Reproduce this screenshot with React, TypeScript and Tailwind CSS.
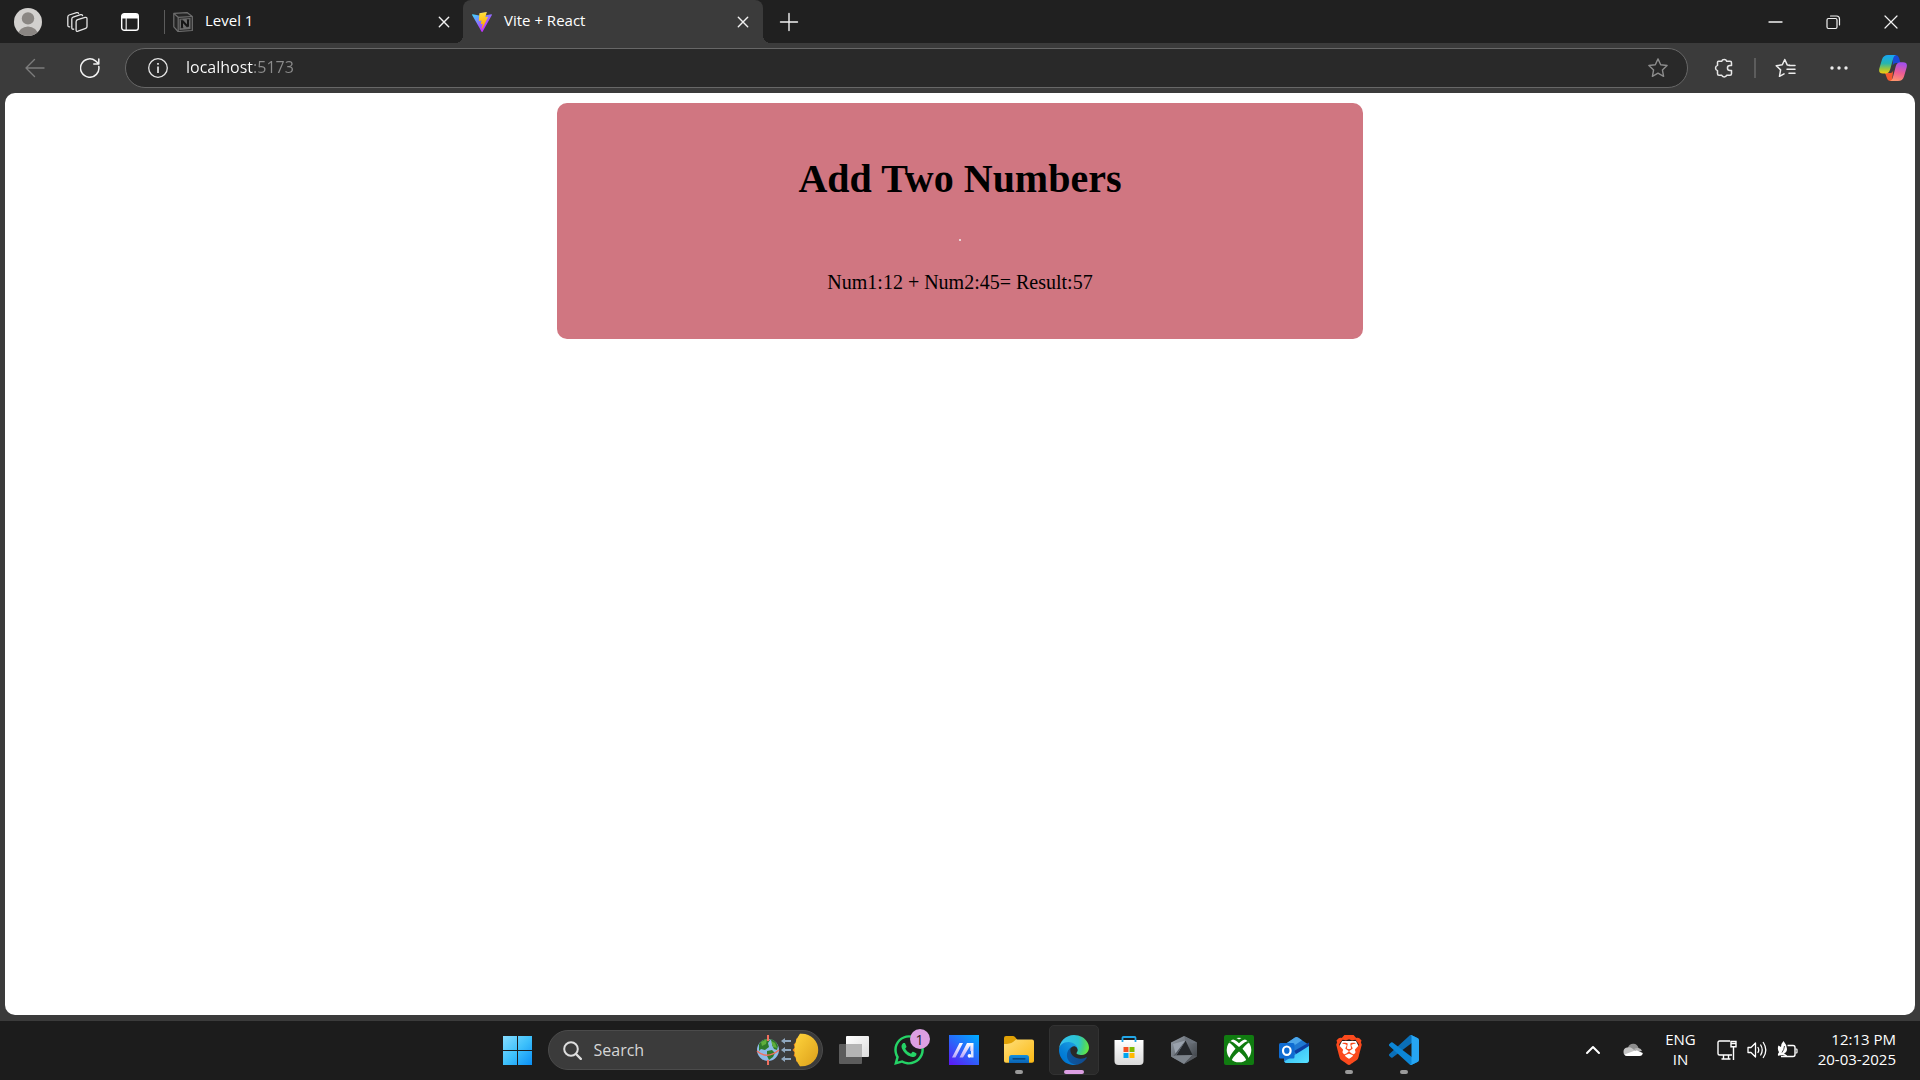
import React from "react";
import { FaWhatsapp } from "react-icons/fa";
import { SiBrave } from "react-icons/si";

type IconProps = { className?: string };

function Line({ d, className = "", width = 1.4, size = 20 }: { d: string; className?: string; width?: number; size?: number }) {
  return (
    <svg
      width={size}
      height={size}
      viewBox={`0 0 ${size} ${size}`}
      fill="none"
      stroke="currentColor"
      strokeWidth={width}
      strokeLinecap="round"
      strokeLinejoin="round"
      className={`shrink-0 ${className}`}
      aria-hidden="true"
    >
      <path d={d} />
    </svg>
  );
}

const closeD = "M5.3 5.3l9.4 9.4M14.7 5.3l-9.4 9.4";
const starD = "M10 .9l2.7 5.8 6.4.8-4.7 4.4 1.2 6.4-5.6-3.1-5.6 3.1 1.2-6.4L.9 7.5l6.4-.8z";

function Avatar() {
  return (
    <svg width="28" height="28" viewBox="0 0 28 28" className="shrink-0" aria-hidden="true">
      <defs>
        <clipPath id="avatar">
          <circle cx="14" cy="14" r="14" />
        </clipPath>
      </defs>
      <g clipPath="url(#avatar)">
        <rect width="28" height="28" fill="#d2d0ce" />
        <circle cx="14" cy="10.4" r="6.2" fill="#8a8683" />
        <ellipse cx="14" cy="27" rx="10" ry="8.6" fill="#8a8683" />
      </g>
    </svg>
  );
}

function Workspaces() {
  return (
    <svg width="22" height="22" viewBox="0 0 22 22" fill="none" stroke="#e4e4e4" strokeWidth="1.3" strokeLinejoin="round" strokeLinecap="round" aria-hidden="true">
      <path d="M10.9 8.9l8.2-2.5q1.9-.5 1.9 1.4v7.6q0 1.4-1.3 1.9l-7.7 2.9q-1.9.6-1.9-1.2v-8.2q0-1.5 1.300-1.9z" />
      <path d="M7.700 18.200q-1.900.3-1.900-1.500V8q0-1.500 1.300-1.900l7.500-2.400q1.600-.4 2 .9" />
      <path d="M3.700 15.800q-1.900.3-1.900-1.500V5.900q0-1.500 1.300-1.900l7.500-2.300q1.600-.4 2 .7" />
    </svg>
  );
}

function VerticalTabs() {
  return (
    <svg width="18" height="18" viewBox="0 0 18 18" fill="none" aria-hidden="true">
      <rect x=".7" y=".7" width="16.600" height="16.600" rx="2.600" stroke="#fff" strokeWidth="1.400" />
      <path d="M1 5.500V3q0-2 2-2h12q2 0 2 2v2.500z" fill="#fff" />
      <path d="M5.200 5v12" stroke="#e8e8e8" strokeWidth="1.200" />
    </svg>
  );
}

function Notion() {
  return (
    <svg width="20" height="20" viewBox="0 0 20 20" fill="none" aria-hidden="true">
      <path d="M.8 1.400L14 .6l5.300 3.900v14L5 19.500.8 14.800z" fill="#262626" stroke="#6f6f6f" strokeWidth="1.200" strokeLinejoin="round" />
      <path d="M1 1.600l4.200 3.700 13.900-.8M5.200 5.300v14" stroke="#6f6f6f" strokeWidth="1.200" />
      <path d="M6.500 6.800l11-.7v11l-11 .8z" fill="#6d6d6d" />
      <path d="M9 15.500V8.600M9.200 8.800l5.600 6M15 14.800V8" stroke="#161616" strokeWidth="2" />
      <path d="M7.800 8.200h2M13.800 7.800h2.500M7.800 15.700h2.500" stroke="#161616" strokeWidth="1" />
    </svg>
  );
}

function Vite() {
  return (
    <svg width="20" height="20" viewBox="0 0 256 257" aria-hidden="true">
      <defs>
        <linearGradient id="viteA" x1="-.8%" x2="57.600%" y1="7.600%" y2="78.400%">
          <stop offset="0" stopColor="#41D1FF" />
          <stop offset="1" stopColor="#BD34FE" />
        </linearGradient>
        <linearGradient id="viteB" x1="43.300%" x2="50.300%" y1="2.200%" y2="89%">
          <stop offset="0" stopColor="#FFEA83" />
          <stop offset=".083" stopColor="#FFDD35" />
          <stop offset="1" stopColor="#FFA800" />
        </linearGradient>
      </defs>
      <path fill="url(#viteA)" d="M255.153 37.938L134.897 252.976c-2.483 4.44-8.862 4.466-11.382.048L.875 37.958c-2.746-4.814 1.371-10.646 6.827-9.67l120.385 21.517a6.537 6.537 0 0 0 2.322-.004l117.867-21.483c5.438-.991 9.574 4.796 6.877 9.62Z" />
      <path fill="url(#viteB)" d="M185.432.063L96.44 17.501a3.268 3.268 0 0 0-2.634 3.014l-5.474 92.456a3.268 3.268 0 0 0 3.997 3.378l24.777-5.718c2.318-.535 4.413 1.507 3.936 3.838l-7.361 36.047c-.495 2.426 1.782 4.5 4.151 3.78l15.304-4.649c2.372-.72 4.652 1.36 4.15 3.788l-11.698 56.621c-.732 3.542 3.979 5.473 5.943 2.437l1.313-2.028l72.516-144.72c1.215-2.423-.88-5.186-3.54-4.672l-25.505 4.922c-2.396.462-4.435-1.77-3.759-4.114l16.646-57.705c.677-2.35-1.37-4.583-3.769-4.113Z" />
    </svg>
  );
}

function Puzzle() {
  return (
    <Line
      width={1.5}
      className="text-[#e6e6e6]"
      d="M4.500 3.300H7.700A2.600 2.600 0 0 1 12.700 3.300H16Q17.500 3.300 17.500 4.800V7.400H16A2.500 2.500 0 0 0 16 12.500H17.500V15.800Q17.500 17.300 16 17.300H12.700A2.600 2.200 0 0 1 7.700 17.300H5Q3.500 17.300 3.500 15.800V12.600A2.700 2.700 0 0 1 3.500 7.400V4.300Q3.500 3.300 4.500 3.300Z"
    />
  );
}

function Favorites() {
  return (
    <svg width="21" height="20" viewBox="0 0 21 20" fill="none" stroke="#ececec" strokeWidth="1.500" strokeLinecap="round" strokeLinejoin="round" aria-hidden="true">
      <path d="M14.500 7.300l-2.300-.4L9.800 1.500 7.300 6.800 1.200 7.700l4.400 4.200-1.100 6.400L9 15.900" />
      <path d="M14 7.600h6M12 11.300h8M14 15.200h6" />
    </svg>
  );
}

function Copilot() {
  return (
    <svg width="28" height="26" viewBox="0 0 28 26" aria-hidden="true">
      <defs>
        <linearGradient id="coA" x1="0" y1="0" x2="0" y2="1">
          <stop offset="0" stopColor="#17a5f5" />
          <stop offset=".45" stopColor="#26b5b0" />
          <stop offset=".75" stopColor="#9cc63c" />
          <stop offset="1" stopColor="#f6c90e" />
        </linearGradient>
        <linearGradient id="coB" x1=".3" y1="0" x2=".1" y2="1">
          <stop offset="0" stopColor="#a650e8" />
          <stop offset=".5" stopColor="#ee5d92" />
          <stop offset="1" stopColor="#ff9a6a" />
        </linearGradient>
      </defs>
      <path d="M14 0h2.500q2.700 0 3.500 2.700L21.500 8H17q-2.500 0-3.300 2.500z" fill="#1a49d6" />
      <path d="M6 18h5.500q2 0 2.700-2.500L13 26h-1.500q-2.800 0-3.600-3z" fill="#f4592f" />
      <path d="M9 0h8q-2 .6-2.700 3L11.300 14Q10 18.500 6.500 18.500H4Q-.8 18.500.3 13.500L3 4.500Q4.400 0 9 0z" fill="url(#coA)" />
      <path d="M19 26h-8q2-.6 2.700-3l3-11.500Q18 7.300 21.500 7.300H24q4.800 0 3.700 5L25 21.500Q23.600 26 19 26z" fill="url(#coB)" />
    </svg>
  );
}

function WindowsLogo() {
  return (
    <svg width="29" height="29" viewBox="0 0 29 29" aria-hidden="true">
      <defs>
        <linearGradient id="win" x1="0" y1="0" x2="1" y2="1">
          <stop offset="0" stopColor="#86dcff" />
          <stop offset=".5" stopColor="#3fc1fb" />
          <stop offset="1" stopColor="#0a8ff5" />
        </linearGradient>
      </defs>
      <path d="M0 0h14v14H0zM15 0h14v14H15zM0 15h14v14H0zM15 15h14v14H15z" fill="url(#win)" />
    </svg>
  );
}

function Equinox() {
  return (
    <svg width="63" height="34" viewBox="0 0 63 34" className="shrink-0" aria-hidden="true">
      <defs>
        <linearGradient id="sun" x1="0" y1="0" x2="1" y2="1">
          <stop offset="0" stopColor="#ffd43c" />
          <stop offset="1" stopColor="#dc9f1a" />
        </linearGradient>
      </defs>
      <circle cx="12" cy="17" r="11" fill="#8dbbe8" />
      <path d="M3 11q3-5 8-5l3 1-2 3 1 4-4 3-4-1-2 2zM14 6q6 1 8 7l-1 4-3-1-2-4 1-2zM11 18l5-1 3 3-2 4-4 3-2-4z" fill="#2f7a2b" />
      <path d="M5 9l6-3-1 5-4 2zM15 8l4 2 2 5-4-1z" fill="#5fae3c" />
      <path d="M1 18q10 9 22-1" fill="none" stroke="#f0705f" strokeWidth="1.500" />
      <path d="M12 2v6M12 27v5" stroke="#f0705f" strokeWidth="2" />
      <g fill="#8fa6bd">
        <path d="M25 8l4-3v2h6v2h-6v2zM25 17l4-3v2h6v2h-6v2zM25 26l4-3v2h6v2h-6v2z" />
      </g>
      <path d="M44 .8l-1 4-3 1 .3 3.500-2.600 2 1 3.200-2.200 2.500 2.200 2.500-1 3.200 2.600 2-.3 3.500 3 1 1 4 4-1V2z" fill="#f08a1c" />
      <path d="M44 .8h2a16.200 16.200 0 0 1 0 32.400h-2q-5.500-7-5.500-16.200T44 .8z" fill="url(#sun)" />
    </svg>
  );
}

function TaskView() {
  return (
    <svg width="30" height="28" viewBox="0 0 30 28" aria-hidden="true">
      <defs>
        <linearGradient id="tv" x1="0" y1="0" x2="1" y2="1">
          <stop offset="0" stopColor="#fff" />
          <stop offset="1" stopColor="#dcdcdc" />
        </linearGradient>
      </defs>
      <rect x="7" y="0" width="23" height="21" rx="1" fill="url(#tv)" />
      <rect x="0" y="8" width="23" height="20" rx="1" fill="#6d6d6d" fillOpacity=".8" />
      <path d="M7 8h16v13H7z" fill="#b4b4b4" />
    </svg>
  );
}

function MyAsus() {
  return (
    <svg width="30" height="30" viewBox="0 0 30 30" aria-hidden="true">
      <defs>
        <linearGradient id="asus" x1=".1" y1="1" x2=".9" y2="0">
          <stop offset="0" stopColor="#5a1cf5" />
          <stop offset=".5" stopColor="#2a66fa" />
          <stop offset="1" stopColor="#00a8ff" />
        </linearGradient>
        <linearGradient id="asusM" x1="0" y1="1" x2="0" y2="0">
          <stop offset="0" stopColor="#b9a8fb" />
          <stop offset="1" stopColor="#fff" />
        </linearGradient>
      </defs>
      <rect width="30" height="30" fill="url(#asus)" />
      <path d="M3 22.500L10.500 8H14L6.500 22.500zM10.500 22.500L18 8h6.500v8h-3.200v-5.500L14 22.500z" fill="url(#asusM)" />
      <circle cx="20.500" cy="20.800" r="1.900" fill="#fff" />
      <path d="M22 16h2.500v6.500H22z" fill="#dfe6ff" />
    </svg>
  );
}

function Folder() {
  return (
    <svg width="30" height="28" viewBox="0 0 30 28" aria-hidden="true">
      <defs>
        <linearGradient id="fold" x1="0" y1="0" x2="1" y2="1">
          <stop offset="0" stopColor="#ffdf7a" />
          <stop offset="1" stopColor="#fbb813" />
        </linearGradient>
        <linearGradient id="foldB" x1="0" y1="0" x2="0" y2="1">
          <stop offset="0" stopColor="#1390df" />
          <stop offset="1" stopColor="#0a62b4" />
        </linearGradient>
      </defs>
      <path d="M0 2q0-2 2-2h7q1 0 2 1l2.500 3H20v6H0z" fill="#e0a106" />
      <path d="M0 8q6 0 9-2l3-2.500h16q2 0 2 2V25q0 1.800-2 1.800H2Q0 26.800 0 25z" fill="url(#fold)" />
      <path d="M5 27v-5.500Q5 19 7.500 19h15q2.500 0 2.500 2.500V27z" fill="url(#foldB)" />
      <path d="M9 22.800h12" stroke="#07396b" strokeWidth="1.200" strokeLinecap="round" />
    </svg>
  );
}

function Edge() {
  return (
    <svg width="30" height="30" viewBox="0 0 256 256" aria-hidden="true">
      <defs>
        <linearGradient id="edA" gradientUnits="userSpaceOnUse" x1="63" y1="177" x2="242" y2="177">
          <stop offset="0" stopColor="#0c59a4" />
          <stop offset="1" stopColor="#114a8b" />
        </linearGradient>
        <linearGradient id="edB" gradientUnits="userSpaceOnUse" x1="157" y1="100" x2="46" y2="221">
          <stop offset="0" stopColor="#1b9de2" />
          <stop offset=".16" stopColor="#1595df" />
          <stop offset=".67" stopColor="#0680d7" />
          <stop offset="1" stopColor="#0078d4" />
        </linearGradient>
        <radialGradient id="edC" gradientUnits="userSpaceOnUse" cx="26" cy="60" r="235">
          <stop offset="0" stopColor="#35c1f1" />
          <stop offset=".3" stopColor="#2fc2df" />
          <stop offset=".6" stopColor="#2bc3d2" />
          <stop offset=".8" stopColor="#46d27b" />
          <stop offset="1" stopColor="#66eb3e" />
        </radialGradient>
      </defs>
      <path fill="url(#edA)" d="M231.1 190.5c-3.4 1.8-6.9 3.4-10.5 4.7a101.73 101.73 0 0 1-35.8 6.4c-47.2 0-88.3-32.4-88.3-74.2.1-11.4 6.400-21.9 16.400-27.3-42.7 1.800-53.7 46.300-53.7 72.300 0 73.7 67.800 81.1 82.500 81.1 7.900 0 19.800-2.300 27-4.600l1.300-.4a128.34 128.34 0 0 0 66.600-52.800c1.200-1.900.6-4.300-1.200-5.500-1.300-.8-2.900-.9-4.300.3z" />
      <path fill="url(#edB)" d="M105.7 241.5c-8.900-5.500-16.600-12.800-22.700-21.3-26.300-36-18.400-86.500 17.600-112.8 3.800-2.700 7.700-5.200 11.900-7.200 3.100-1.500 8.400-4.100 15.500-4 10.100.1 19.600 4.900 25.700 13 4 5.400 6.300 11.900 6.400 18.700 0-.2 24.500-79.600-80-79.600-43.900 0-80 41.700-80 78.200-.2 19.300 4 38.500 12.100 56 27.600 58.800 94.800 87.600 156.400 67.100-21.100 6.600-44.1 3.700-62.900-8.100z" />
      <path fill="url(#edC)" d="M152.3 148.9c-.9 1-3.400 2.500-3.400 5.600 0 2.600 1.700 5.200 4.800 7.300 14.300 10 41.400 8.600 41.500 8.600 10.700 0 21.1-2.900 30.300-8.300 18.800-11 30.400-31.100 30.400-52.900.3-22.400-8-37.300-11.300-43.900C223.5 23.9 177.7 0 128 0 58 0 1 56.2 0 126.2c.5-36.5 36.8-66 80-66 3.500 0 23.500.3 42 10.1 16.300 8.600 24.900 18.900 30.800 29.200 6.200 10.7 7.300 24.100 7.300 29.500 0 5.300-2.700 13.300-7.800 19.900z" />
    </svg>
  );
}

function Store() {
  return (
    <svg width="30" height="30" viewBox="0 0 30 30" aria-hidden="true">
      <defs>
        <linearGradient id="store" x1="0" y1="0" x2="0" y2="1">
          <stop offset="0" stopColor="#fff" />
          <stop offset="1" stopColor="#dadada" />
        </linearGradient>
      </defs>
      <path d="M.5 5h29v21q0 4-4 4h-21q-4 0-4-4z" fill="url(#store)" />
      <path d="M8.500 7V2.800Q8.500 2 9.500 2h11q1 0 1 .8V7" fill="none" stroke="#22a7e8" strokeWidth="1.800" />
      <path d="M9.500 12h5v5h-5z" fill="#f25022" />
      <path d="M15.500 12h5v5h-5z" fill="#7fba00" />
      <path d="M9.500 18h5v5h-5z" fill="#00a4ef" />
      <path d="M15.500 18h5v5h-5z" fill="#ffb900" />
    </svg>
  );
}

function Armoury() {
  return (
    <svg width="26" height="28" viewBox="0 0 26 28" aria-hidden="true">
      <defs>
        <linearGradient id="arm" x1="0" y1="0" x2="1" y2="1">
          <stop offset="0" stopColor="#98a0aa" />
          <stop offset="1" stopColor="#35393e" />
        </linearGradient>
      </defs>
      <path d="M13 0l13 6.500v14L13 28 0 20.500v-14z" fill="url(#arm)" />
      <path d="M13 0l13 6.500-5 1L14.500 4.500z" fill="#6b727b" />
      <path d="M14.500 4.500L21.500 19 5 19.500z" fill="#24272b" />
      <path d="M14.500 4.500L5 19.500 2 8z" fill="#9aa2ad" />
      <path d="M14.500 4.500L6.500 17.800 5 19.500 2.500 20z" fill="#50565e" />
      <path d="M5 19.500l16.500-.5L13 28 0 20.500z" fill="#7c838b" />
      <path d="M21.500 19L26 20.500 13 28z" fill="#55595f" />
    </svg>
  );
}

function Xbox() {
  return (
    <svg width="30" height="30" viewBox="0 0 30 30" aria-hidden="true">
      <rect width="30" height="30" rx="2" fill="#107c10" />
      <circle cx="15" cy="15" r="12.300" fill="#fff" />
      <path d="M15 8.200Q10.500 3.800 6.800 4.300L8.600 2.600Q12.500 2.400 15 4.500q2.500-2.100 6.400-1.900l1.800 1.700Q19.500 3.800 15 8.200z" fill="#107c10" />
      <path d="M6 6Q8.500 6 15 12q6.500-6 9-6l1 2q-2 0-6.500 5.800Q24.500 20.500 25 25l-2.500 1Q21.500 22 15 16.500 8.500 22 7.500 26L5 25q.5-4.500 6.500-11.200Q7 8 5 8z" fill="#107c10" />
    </svg>
  );
}

function Outlook() {
  return (
    <svg width="30" height="26" viewBox="0 0 30 26" aria-hidden="true">
      <defs>
        <linearGradient id="ol" x1="0" y1="0" x2="1" y2="1">
          <stop offset="0" stopColor="#2fb4f2" />
          <stop offset="1" stopColor="#58e2ff" />
        </linearGradient>
      </defs>
      <path d="M5 8L16 .6q1.500-1 3 0L30 8v15q0 3-3 3H8q-3 0-3-3z" fill="#1f78d1" />
      <path d="M5 8L16 .6q1.500-1 3 0l4 2.700L10 12z" fill="#4ba6ea" />
      <path d="M15 14L30 5.500v4L18 18z" fill="#0b3fa3" />
      <path d="M30 9v14q0 3-3 3H8q-2 0-2.800-1.500z" fill="url(#ol)" />
      <rect y="6" width="15.500" height="15.500" rx="1.500" fill="#0f6cd2" />
      <ellipse cx="7.800" cy="13.700" rx="3.800" ry="4.200" fill="none" stroke="#fff" strokeWidth="2.200" />
    </svg>
  );
}

function Brave() {
  return (
    <span className="relative flex">
      <svg width="30" height="30" viewBox="0 0 30 30" className="absolute inset-0" aria-hidden="true">
        <path d="M8 6h14l3 6-4 13-6 4-6-4-4-13z" fill="#fff" />
      </svg>
      <SiBrave size={30} color="#fb4a1d" className="relative" aria-hidden="true" />
    </span>
  );
}

function Code() {
  return (
    <svg width="30" height="30" viewBox="0 0 100 100" aria-hidden="true">
      <path fill="#0a6fb8" d="M96.461 10.796L75.857.876a6.230 6.230 0 0 0-7.107 1.207L1.299 63.583a4.167 4.167 0 0 0 .004 6.162l5.510 5.009a4.167 4.167 0 0 0 5.321.237L93.361 13.370C96.086 11.303 100 13.246 100 16.667v-.240c0-2.401-1.375-4.590-3.539-5.631z" />
      <path fill="#0c86d6" d="M96.461 89.204l-20.604 9.920a6.230 6.230 0 0 1-7.107-1.207L1.299 36.417a4.167 4.167 0 0 1 .004-6.162l5.510-5.009a4.167 4.167 0 0 1 5.321-.237L93.361 86.630C96.086 88.697 100 86.754 100 83.333v.240c0 2.401-1.375 4.590-3.539 5.631z" />
      <path fill="#26a5f3" d="M75.858 99.126a6.230 6.230 0 0 1-7.108-1.210C71.056 100.223 75 98.590 75 95.328V4.672C75 1.410 71.056-.223 68.750 2.083A6.230 6.230 0 0 1 75.858.874l20.600 9.907A6.250 6.250 0 0 1 100 16.413v67.174a6.250 6.250 0 0 1-3.541 5.633z" />
    </svg>
  );
}

function Cloud({ className }: IconProps) {
  return (
    <svg width="20" height="14" viewBox="0 0 20 14" className={className} aria-hidden="true">
      <path d="M5 4.500A5.500 5.500 0 0 1 15.500 5L10 9z" fill="#8d8d8d" />
      <path d="M4.300 13A4.300 4.300 0 0 1 4 4.500q3-1 5 .8L15 10l-4 3z" fill="#c4c4c4" />
      <path d="M15.500 5a4 4 0 0 1 3.500 3l-5 1-3-3q2-1.500 4.500-1z" fill="#b0b0b0" />
      <path d="M1.500 11.500L12 7.600q1-.4 2 0L19.800 10q-.3 3-3.300 3h-12q-2 0-3-1.500z" fill="#fff" />
    </svg>
  );
}

function Network() {
  return (
    <svg width="20" height="20" viewBox="0 0 20 20" fill="none" stroke="#fff" strokeWidth="1.400" aria-hidden="true">
      <path d="M13 1H2.500Q1 1 1 2.500v11Q1 15 2.500 15H15M6.500 15v4M11.500 15v4M4.500 19h9" />
      <path d="M14 1.500h5v5.200h-5zM16.500 7v13" />
      <path d="M14 3.500h5" />
    </svg>
  );
}

function Volume() {
  return (
    <svg width="20" height="18" viewBox="0 0 20 18" fill="none" stroke="#fff" strokeWidth="1.300" strokeLinecap="round" strokeLinejoin="round" aria-hidden="true">
      <path d="M1 6.500h3L8.500 2v14L4 11.500H1z" />
      <path d="M11 6.500q1.500 2.500 0 5M13.700 4q3 5 0 10M16.300 1.500q5 7.500 0 15" />
    </svg>
  );
}

function Battery() {
  return (
    <svg width="21" height="18" viewBox="0 0 21 18" fill="none" aria-hidden="true">
      <path d="M10.500 4.500H16q2 0 2 2v7q0 2-2 2H4" stroke="#fff" strokeWidth="1.400" />
      <path d="M18.500 8h.8q.7 0 .7.700v2.600q0 .7-.7.700h-.8" stroke="#fff" strokeWidth="1.200" />
      <path d="M6.500 0q3.500 4 3.500 8 0 3.500-3 4.300L10 14.500v1L5.500 14 1 14.800q-.5-2 1-3.500Q0 7.500 1.500 4.500L4 6q0-3.500 2.500-6z" fill="#fff" />
      <path d="M7.500 5q-.3 3.500-2.500 6.500" stroke="#1c1c1c" strokeWidth=".8" />
    </svg>
  );
}

function Tab({ title, icon, active = false }: { title: string; icon: React.ReactNode; active?: boolean }) {
  return (
    <div
      role="tab"
      aria-selected={active}
      className={
        active
          ? "relative flex h-full w-[300px] items-center rounded-t-[8px] bg-[#3b3b3b] pr-2 pl-[9px]"
          : "flex h-full w-[298px] items-center pr-[7px] pl-2"
      }
    >
      {active && (
        <>
          <span className="absolute bottom-0 -left-2 size-2 bg-[radial-gradient(circle_at_0_0,transparent_8px,#3b3b3b_8px)]" />
          <span className="absolute -right-2 bottom-0 size-2 bg-[radial-gradient(circle_at_100%_0,transparent_8px,#3b3b3b_8px)]" />
        </>
      )}
      {icon}
      <span className="ml-3 flex-1 pb-0.5 text-[15px] text-white">{title}</span>
      <button type="button" aria-label={`Close ${title}`} className="flex size-6 items-center justify-center text-[#f2f2f2]">
        <Line d={closeD} />
      </button>
    </div>
  );
}

function ToolButton({ label, className = "", children }: { label: string; className?: string; children: React.ReactNode }) {
  return (
    <button type="button" aria-label={label} className={`flex h-10 w-[54px] shrink-0 items-center justify-center ${className}`}>
      {children}
    </button>
  );
}

type TaskApp = { name: string; icon: React.ReactNode; running?: boolean; active?: boolean; badge?: string };

const apps: TaskApp[] = [
  { name: "Task view", icon: <TaskView /> },
  { name: "WhatsApp", icon: <FaWhatsapp size={34} color="#25d366" />, badge: "1" },
  { name: "MyASUS", icon: <MyAsus /> },
  { name: "File Explorer", icon: <Folder />, running: true },
  { name: "Microsoft Edge", icon: <Edge />, active: true },
  { name: "Microsoft Store", icon: <Store /> },
  { name: "Armoury Crate", icon: <Armoury /> },
  { name: "Xbox", icon: <Xbox /> },
  { name: "Outlook", icon: <Outlook /> },
  { name: "Brave", icon: <Brave />, running: true },
  { name: "Visual Studio Code", icon: <Code />, running: true },
];

function TaskButton({ app }: { app: TaskApp }) {
  return (
    <button
      type="button"
      aria-label={app.name}
      className={`relative flex size-[50px] items-center justify-center rounded-[5px] ${app.active ? "border border-[#323232] bg-[#292929]" : ""}`}
    >
      {app.icon}
      {app.badge && (
        <span className="absolute top-1 right-1 flex size-5 items-center justify-center rounded-full bg-[#dc9fe3] text-[14px] text-[#1c1c1c]">
          {app.badge}
        </span>
      )}
      {app.running && <span className="absolute bottom-px h-1 w-2 rounded-full bg-[#9a9a9a]" />}
      {app.active && <span className="absolute bottom-0 h-1 w-5 rounded-full bg-[#dc9fe3]" />}
    </button>
  );
}

function BrowserChrome() {
  return (
    <header>
      <div className="flex h-[43px] bg-[#202020]">
        <div className="flex items-center pl-[14px]">
          <button type="button" aria-label="Profile">
            <Avatar />
          </button>
          <button type="button" aria-label="Workspaces" className="ml-6">
            <Workspaces />
          </button>
          <button type="button" aria-label="Tab actions" className="ml-[33px]">
            <VerticalTabs />
          </button>
          <span className="ml-[25px] h-6 w-px bg-[#5c5c5c]" />
        </div>
        <div role="tablist" className="flex">
          <Tab title="Level 1" icon={<Notion />} />
          <Tab title="Vite + React" icon={<Vite />} active />
        </div>
        <button type="button" aria-label="New tab" className="ml-[14px] flex w-6 items-center justify-center text-[#f2f2f2]">
          <Line d="M10 1.500v17M1.500 10h17" />
        </button>
        <div className="ml-auto flex text-[#f2f2f2]">
          <button type="button" aria-label="Minimize" className="flex w-[58px] items-center justify-center">
            <Line d="M4 10h13" />
          </button>
          <button type="button" aria-label="Restore" className="flex w-[58px] items-center justify-center">
            <Line d="M5.500 6.500h7q1.500 0 1.500 1.500v7q0 1.500-1.500 1.500h-7Q4 16.500 4 15V8q0-1.500 1.500-1.500zM7.500 4h6q3 0 3 3v6" width={1.2} />
          </button>
          <button type="button" aria-label="Close window" className="flex w-[58px] items-center justify-center">
            <Line d="M4 4l12 12M16 4L4 16" width={1.2} />
          </button>
        </div>
      </div>
      <div className="flex h-[50px] items-center bg-[#3b3b3b] pl-2">
        <ToolButton label="Back" className="text-[#7c7c7c]">
          <Line d="M9.500 1.500L1 10l8.500 8.500M1 10h18" />
        </ToolButton>
        <ToolButton label="Refresh" className="ml-px text-[#f2f2f2]">
          <Line d="M18.800 8.500A9.200 9.200 0 1 1 15.500 2.900L18.500 5.500M18.800 1v5h-5" width={1.5} />
        </ToolButton>
        <div className="ml-2 flex h-10 flex-1 items-center rounded-full border border-[#676767] bg-[#292929] pr-[19px] pl-[22px]">
          <svg width="20" height="20" viewBox="0 0 20 20" fill="none" stroke="#e6e6e6" strokeWidth="1.300" aria-hidden="true">
            <circle cx="10" cy="10" r="9.300" />
            <path d="M10 8.500V15M10 5v1.800" strokeWidth="1.700" />
          </svg>
          <input
            type="text"
            aria-label="Address"
            defaultValue="localhost:5173"
            className="ml-[18px] h-8 flex-1 bg-[linear-gradient(90deg,#fff_68px,#8c8c8c_68px)] bg-clip-text pb-0.5 text-[16px] text-transparent caret-white outline-none"
          />
          <button type="button" aria-label="Add to favorites" className="text-[#8c8c8c]">
            <Line d={starD} />
          </button>
        </div>
        <ToolButton label="Extensions" className="ml-[9px]">
          <Puzzle />
        </ToolButton>
        <span className="mr-0.5 ml-[3px] h-5 w-0.5 bg-[#5c5c5c]" />
        <ToolButton label="Favorites">
          <Favorites />
        </ToolButton>
        <ToolButton label="Settings and more">
          <svg width="18" height="4" viewBox="0 0 18 4" fill="#ececec" aria-hidden="true">
            <circle cx="2" cy="2" r="1.700" />
            <circle cx="9" cy="2" r="1.700" />
            <circle cx="16" cy="2" r="1.700" />
          </svg>
        </ToolButton>
        <ToolButton label="Copilot">
          <Copilot />
        </ToolButton>
      </div>
    </header>
  );
}

function Taskbar() {
  return (
    <footer className="grid h-[59px] grid-cols-[1fr_auto_1fr] items-center bg-[#1c1c1c] pb-px">
      <div />
      <div className="flex items-center gap-[5px] pl-px">
        <button type="button" aria-label="Start" className="flex size-[50px] items-center justify-center">
          <WindowsLogo />
        </button>
        <label className="flex h-10 w-[275px] items-center rounded-full border border-[#4b4b4b] bg-[#3b3b3b] pr-[3px] pl-[14px]">
          <svg width="19" height="19" viewBox="0 0 19 19" fill="none" stroke="#dedede" strokeWidth="2" strokeLinecap="round" className="shrink-0" aria-hidden="true">
            <circle cx="8" cy="8" r="6.800" />
            <path d="M13 13l4.800 4.800" strokeWidth="2.400" />
          </svg>
          <input
            type="text"
            aria-label="Search"
            placeholder="Search"
            className="ml-3 min-w-0 flex-1 text-[16px] outline-none placeholder:text-[#d6d6d6]"
          />
          <Equinox />
        </label>
        <div className="ml-px flex gap-[5px]">
          {apps.map((app) => (
            <TaskButton key={app.name} app={app} />
          ))}
        </div>
      </div>
      <div className="flex items-center justify-end pr-6 text-[15px] leading-5 text-white">
        <button type="button" aria-label="Show hidden icons">
          <Line d="M4 13l6-6 6 6" width={2} />
        </button>
        <button type="button" aria-label="OneDrive" className="ml-5">
          <Cloud />
        </button>
        <button type="button" className="ml-[22px] pb-0.5 text-center">
          ENG
          <br />
          IN
        </button>
        <button type="button" aria-label="Network, volume and battery" className="ml-[21px] flex items-center gap-[10px]">
          <Network />
          <Volume />
          <Battery />
        </button>
        <button type="button" className="ml-5 pb-[3px] text-right">
          12:13 PM
          <br />
          20-03-2025
        </button>
      </div>
    </footer>
  );
}

export default function App() {
  return (
    <div className="flex min-h-screen flex-col bg-[#3b3b3b] font-['Open_Sans','Noto_Sans',sans-serif]">
      <BrowserChrome />
      <main className="mx-[5px] mb-[6px] flex-1 rounded-[10px] bg-white pt-[10px] font-['Liberation_Serif',serif] text-black">
        <section className="mx-auto flex w-[806px] max-w-full flex-col items-center rounded-[10px] bg-[#d07681] pt-[53px] pb-[45px]">
          <h1 className="text-[40px] leading-[46px] font-bold">Add Two Numbers</h1>
          <hr className="mt-[37px] mb-[29px] w-0.5 border-t-2 border-[#ead0d3]" />
          <p className="text-[20px] leading-6">Num1:12 + Num2:45= Result:57</p>
        </section>
      </main>
      <Taskbar />
    </div>
  );
}
